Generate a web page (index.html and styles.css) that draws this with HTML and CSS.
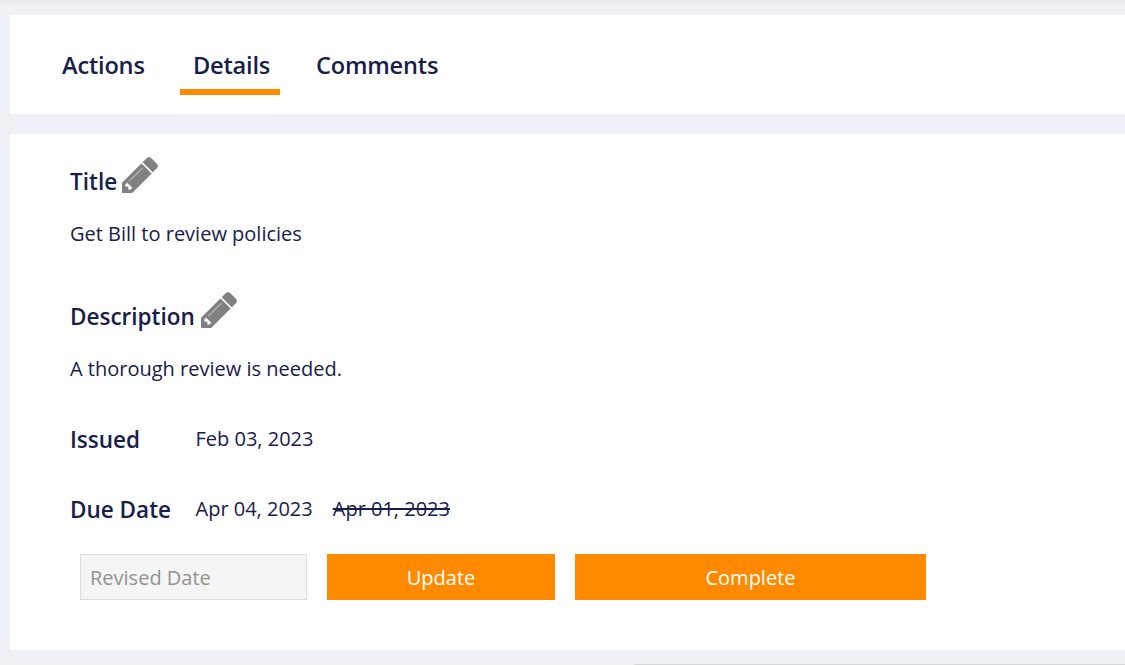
FILE: index.html
```html
<!DOCTYPE html>
<html lang="en">
<head>
    <meta charset="UTF-8">
    <title>Action Details</title>
    <link rel="stylesheet" href="styles.css">
</head>
<body>
    <div class="card tabs">
        <a class="tab">Actions</a>
        <a class="tab active">Details</a>
        <a class="tab">Comments</a>
    </div>

    <div class="card details">
        <!-- Title -->
        <div class="heading heading-title">
            <h3>Title</h3>
            <svg class="pencil" viewBox="128 128 1536 1536"><path d="M491 1536l91-91-235-235-91 91v107h128v128h107zm523-928q0-22-22-22-10 0-17 7l-542 542q-7 7-7 17 0 22 22 22 10 0 17-7l542-542q7-7 7-17zm-54-192l416 416-832 832h-416v-416zm683 96q0 53-37 90l-166 166-416-416 166-165q36-38 90-38 53 0 91 38l235 234q37 39 37 91z"/></svg>
        </div>
        <p class="text">Get Bill to review policies</p>

        <!-- Description -->
        <div class="heading heading-desc">
            <h3>Description</h3>
            <svg class="pencil" viewBox="128 128 1536 1536"><path d="M491 1536l91-91-235-235-91 91v107h128v128h107zm523-928q0-22-22-22-10 0-17 7l-542 542q-7 7-7 17 0 22 22 22 10 0 17-7l542-542q7-7 7-17zm-54-192l416 416-832 832h-416v-416zm683 96q0 53-37 90l-166 166-416-416 166-165q36-38 90-38 53 0 91 38l235 234q37 39 37 91z"/></svg>
        </div>
        <p class="text">A thorough review is needed.</p>

        <!-- Dates -->
        <div class="date-row issued">
            <h3 class="date-label">Issued</h3>
            <span class="text">Feb 03, 2023</span>
        </div>
        <div class="date-row due">
            <h3 class="date-label">Due Date</h3>
            <span class="text">Apr 04, 2023</span>
            <s class="text old-date">Apr 01, 2023</s>
        </div>

        <form class="revise">
            <input type="text" class="revise-input" placeholder="Revised Date">
            <button type="button" class="btn btn-update">Update</button>
            <button type="button" class="btn btn-complete">Complete</button>
        </form>
    </div>

    <div class="footer-line"></div>
</body>
</html>
```

FILE: styles.css
```css
/* styles.css */
html, body {
    height: 100%;
}

body {
    margin: 0;
    padding: 15px 0 0 10px;
    box-sizing: border-box;
    overflow: hidden;
    background: linear-gradient(#e9eaf0, #f0f1f7 6px);
    color: #18204a;
    font-family: "Open Sans", "Noto Sans", sans-serif;
}

.card {
    background-color: white;
}

/* tabs */
.tabs {
    display: flex;
    gap: 23px;
    height: 99px;
    padding-left: 39px;
    box-sizing: border-box;
    margin-bottom: 20px;
}

.tab {
    flex-shrink: 0;
    height: 74px;
    padding: 0 13px;
    font-size: 23.6px;
    font-weight: 550;
    letter-spacing: -0.2px;
    line-height: 100px;
    text-align: center;
    white-space: nowrap;
    border-bottom: 6px solid transparent;
}

.tab:first-child {
    width: 82px;
}

.tab:nth-child(2) {
    width: 74px;
}

.tab:last-child {
    width: 122px;
}

.tab.active {
    border-bottom-color: #ff8a00;
}

/* details */
.details {
    height: 516px;
    box-sizing: border-box;
    padding: 23px 0 0 60px;
}

.heading {
    display: flex;
    align-items: flex-end;
    gap: 6px;
    height: 36px;
}

.heading-title {
    gap: 5px;
}

.heading-desc {
    margin-top: 45px;
}

h3 {
    margin: 0;
    font-size: 22.5px;
    font-weight: 550;
    line-height: 30px;
}

.heading h3 {
    margin-bottom: -4px;
}

.pencil {
    width: 36px;
    height: 36px;
    fill: #808080;
    stroke: #808080;
    stroke-width: 30;
}

.text {
    margin: 0;
    font-size: 20px;
    line-height: 26px;
}

.heading + .text {
    margin-top: 28px;
}

.date-row {
    display: flex;
    align-items: center;
    height: 30px;
}

.issued {
    margin-top: 42px;
}

.due {
    margin-top: 40px;
}

.date-label {
    width: 125.5px;
    flex-shrink: 0;
    margin-top: 2px;
}

.old-date {
    margin-left: 20px;
}

/* revise form */
.revise {
    display: flex;
    gap: 20px;
    margin: 30px 0 0 10px;
}

.revise-input {
    width: 227px;
    height: 46px;
    box-sizing: border-box;
    padding: 0 9px;
    border: 1px solid #dcdcdc;
    background-color: #f5f5f5;
    font-family: inherit;
    font-size: 20px;
}

.revise-input::placeholder {
    color: #929292;
    opacity: 1;
}

.btn {
    height: 46px;
    border: none;
    padding: 0;
    background-color: #ff8a00;
    color: white;
    font-family: inherit;
    font-size: 20px;
}

.btn-update {
    width: 228px;
}

.btn-complete {
    width: 351px;
}

.footer-line {
    position: absolute;
    left: 634px;
    right: 0;
    top: 664px;
    height: 1px;
    background-color: #d8d8d8;
}
```
